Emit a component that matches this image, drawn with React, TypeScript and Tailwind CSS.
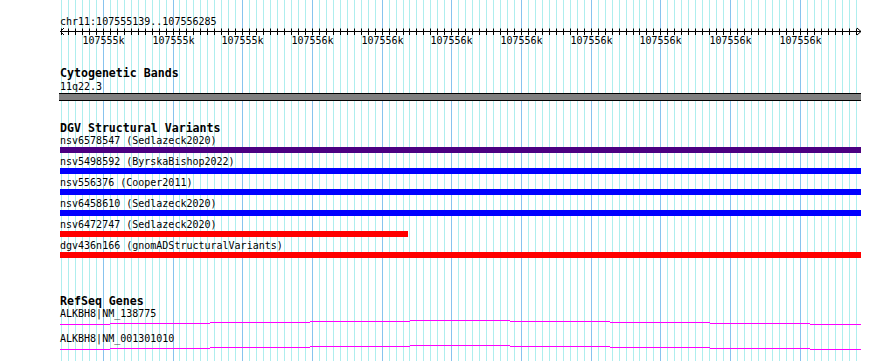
import React from "react";

const mono = { fontFamily: '"DejaVu Sans Mono", "Liberation Mono", monospace' };

const gridXs: { x: number; major: boolean }[] = [];
for (let j = -6; j <= 108; j++) {
  const x = Math.floor(103.3 + 6.97 * j);
  gridXs.push({ x, major: (j + 600) % 10 === 0 });
}

const majorLabels = gridXs
  .filter((g) => g.major)
  .map((g, i) => ({ x: g.x, label: i < 3 ? "107555k" : "107556k" }));

function Grid() {
  return (
    <svg className="absolute left-0 top-0" width={890} height={361}>
      {gridXs.map((g, i) => (
        <line
          key={i}
          x1={g.x + 0.5}
          x2={g.x + 0.5}
          y1={0}
          y2={361}
          stroke={g.major ? "#87c3ee" : "#aeeeee"}
          strokeWidth={1}
        />
      ))}
    </svg>
  );
}

function Ruler() {
  const y = 5.5;
  return (
    <svg width={890} height={24} className="block -ml-[60px] -mt-[2px]">
      <line x1={60} x2={861} y1={y} y2={y} stroke="#000" strokeWidth={1} />
      {gridXs.map((g, i) => (
        <line
          key={i}
          x1={g.x + 0.5}
          x2={g.x + 0.5}
          y1={2.5}
          y2={9}
          stroke="#000"
          strokeWidth={1}
        />
      ))}
      <polyline points="64,2 60.5,5.5 64,9" fill="none" stroke="#000" strokeWidth={1} />
      <polyline points="857,2 861,5.5 857,9" fill="none" stroke="#000" strokeWidth={1} />
      {majorLabels.map((m, i) => (
        <text
          key={i}
          x={m.x + 0.5}
          y={18}
          textAnchor="middle"
          fontSize={10}
          fill="#000"
          style={mono}
        >
          {m.label}
        </text>
      ))}
    </svg>
  );
}

function GeneLine() {
  const ys = [4, 3, 2, 1, 0, 1, 2, 3, 4];
  const xs = [60, 110, 210, 310, 410, 510, 610, 710, 810, 861];
  return (
    <svg width={801} height={5} className="block">
      {ys.map((yy, i) => (
        <line
          key={i}
          x1={xs[i] - 60}
          x2={xs[i + 1] - 60}
          y1={yy + 0.5}
          y2={yy + 0.5}
          stroke="#ff00ff"
          strokeWidth={1}
        />
      ))}
    </svg>
  );
}

const variants = [
  { label: "nsv6578547 (Sedlazeck2020)", color: "bg-[#4b0082]", w: "w-[801px]" },
  { label: "nsv5498592 (ByrskaBishop2022)", color: "bg-[#0000ff]", w: "w-[801px]" },
  { label: "nsv556376 (Cooper2011)", color: "bg-[#0000ff]", w: "w-[801px]" },
  { label: "nsv6458610 (Sedlazeck2020)", color: "bg-[#0000ff]", w: "w-[801px]" },
  { label: "nsv6472747 (Sedlazeck2020)", color: "bg-[#ff0000]", w: "w-[348px]" },
  { label: "dgv436n166 (gnomADStructuralVariants)", color: "bg-[#ff0000]", w: "w-[801px]" },
];

function Label({ children }: { children: React.ReactNode }) {
  return (
    <div className="h-[12px] text-[10px] leading-[12px] text-black whitespace-nowrap" style={mono}>
      {children}
    </div>
  );
}

function Title({ children }: { children: React.ReactNode }) {
  return (
    <div className="h-[14px] text-[11.6px] leading-[14px] font-bold text-black whitespace-nowrap" style={mono}>
      {children}
    </div>
  );
}

export default function App() {
  return (
    <div className="relative w-[890px] h-[361px] overflow-hidden bg-white">
      <Grid />
      <div className="relative flex flex-col pl-[60px]">
        <div className="h-[16px]" />
        <Label>chr11:107555139..107556285</Label>
        <Ruler />
        <div className="mt-[16px]">
          <Title>Cytogenetic Bands</Title>
        </div>
        <div className="mt-[1px]">
          <Label>11q22.3</Label>
        </div>
        <div className="h-[8px] w-[802px] -ml-[1px] border-y border-black bg-[#808080]" />
        <div className="mt-[20px]">
          <Title>DGV Structural Variants</Title>
        </div>
        <div className="flex flex-col gap-[3px]">
          {variants.map((v, i) => (
            <div key={i} className="flex flex-col">
              <Label>{v.label}</Label>
              <div className={`h-[6px] ${v.w} ${v.color}`} />
            </div>
          ))}
        </div>
        <div className="mt-[36px]">
          <Title>RefSeq Genes</Title>
        </div>
        <Label>ALKBH8|NM_138775</Label>
        <GeneLine />
        <div className="mt-[8px]">
          <Label>ALKBH8|NM_001301010</Label>
        </div>
        <GeneLine />
      </div>
    </div>
  );
}
